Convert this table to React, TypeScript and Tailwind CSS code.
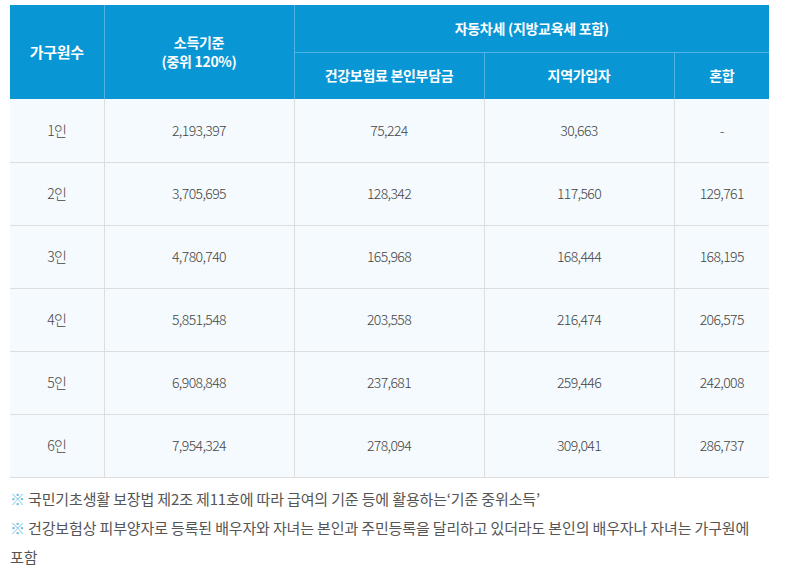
const rows = [
  ["1인", "2,193,397", "75,224", "30,663", "-"],
  ["2인", "3,705,695", "128,342", "117,560", "129,761"],
  ["3인", "4,780,740", "165,968", "168,444", "168,195"],
  ["4인", "5,851,548", "203,558", "216,474", "206,575"],
  ["5인", "6,908,848", "237,681", "259,446", "242,008"],
  ["6인", "7,954,324", "278,094", "309,041", "286,737"],
];

export default function App() {
  return (
    <div className="min-h-[573px] bg-white pl-[10px] pt-[5px] font-['Noto_Sans_CJK_KR',sans-serif]">
      <table className="w-[759px] table-fixed border-collapse text-center text-[14px]">
        <colgroup>
          <col className="w-[94px]" />
          <col className="w-[190px]" />
          <col className="w-[190px]" />
          <col className="w-[190px]" />
          <col className="w-[95px]" />
        </colgroup>
        <thead className="bg-[#0896d5] font-bold tracking-[-0.3px] text-white">
          <tr className="h-[47px]">
            <th rowSpan={2} className="border-r border-[#4fb3e3] text-[15px]">가구원수</th>
            <th rowSpan={2} className="border-r border-[#4fb3e3] leading-[19px]">
              소득기준
              <br />
              (중위 120%)
            </th>
            <th colSpan={3} className="border-b border-[#4fb3e3]">
              자동차세 (지방교육세 포함)
            </th>
          </tr>
          <tr className="h-[47px]">
            <th className="border-r border-[#4fb3e3]">건강보험료 본인부담금</th>
            <th className="border-r border-[#4fb3e3]">지역가입자</th>
            <th>혼합</th>
          </tr>
        </thead>
        <tbody className="bg-[#f4fafd] font-light tracking-[-0.6px] text-[#444]">
          {rows.map((r) => (
            <tr key={r[0]} className="h-[63px] border-b border-[#dddddd]">
              {r.map((c, i) => (
                <td key={i} className={i < 4 ? "border-r border-[#dddddd]" : ""}>
                  {c}
                </td>
              ))}
            </tr>
          ))}
        </tbody>
      </table>
      <div className="mt-[6px] break-keep text-[15px] leading-[29px] tracking-[-0.15px] text-[#555]">
        <p>
          <span className="text-[#6cc0e6]">※</span> 국민기초생활 보장법 제2조 제11호에 따라 급여의 기준 등에 활용하는‘기준 중위소득’
        </p>
        <p className="w-[765px]">
          <span className="text-[#6cc0e6]">※</span> 건강보험상 피부양자로 등록된 배우자와 자녀는 본인과 주민등록을 달리하고 있더라도 본인의 배우자나 자녀는 가구원에 포함
        </p>
      </div>
    </div>
  );
}
